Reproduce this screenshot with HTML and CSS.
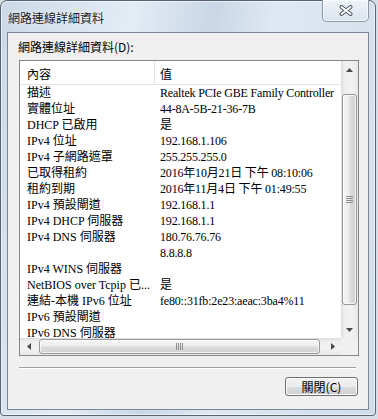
FILE: index.html
```html
<!DOCTYPE html>
<html lang="zh-Hant">
<head>
    <meta charset="UTF-8">
    <title>網路連線詳細資料</title>
    <link rel="stylesheet" href="styles.css">
</head>
<body>
    <div class="window">
        <div class="titlebar">
            <span class="title">網路連線詳細資料</span>
            <div class="close-btn">
                <svg width="14" height="11" viewBox="0 0 14 11">
                    <path d="M2.5 2 L11.5 9 M11.5 2 L2.5 9" stroke="#4f5a68" stroke-width="4" stroke-linecap="round"/>
                    <path d="M2.5 2 L11.5 9 M11.5 2 L2.5 9" stroke="#ffffff" stroke-width="2" stroke-linecap="round"/>
                </svg>
            </div>
        </div>

        <div class="client">
            <div class="caption">網路連線詳細資料(D):</div>

            <div class="listview">
                <div class="list-body">
                    <div class="list-header">
                        <div class="cell-name">內容</div>
                        <div class="cell-value">值</div>
                    </div>
                    <div class="row"><div class="cell-name">描述</div><div class="cell-value">Realtek PCIe GBE Family Controller</div></div>
                    <div class="row"><div class="cell-name">實體位址</div><div class="cell-value">44-8A-5B-21-36-7B</div></div>
                    <div class="row"><div class="cell-name">DHCP 已啟用</div><div class="cell-value">是</div></div>
                    <div class="row"><div class="cell-name">IPv4 位址</div><div class="cell-value">192.168.1.106</div></div>
                    <div class="row"><div class="cell-name">IPv4 子網路遮罩</div><div class="cell-value">255.255.255.0</div></div>
                    <div class="row"><div class="cell-name">已取得租約</div><div class="cell-value">2016年10月21日 下午 08:10:06</div></div>
                    <div class="row"><div class="cell-name">租約到期</div><div class="cell-value">2016年11月4日 下午 01:49:55</div></div>
                    <div class="row"><div class="cell-name">IPv4 預設閘道</div><div class="cell-value">192.168.1.1</div></div>
                    <div class="row"><div class="cell-name">IPv4 DHCP 伺服器</div><div class="cell-value">192.168.1.1</div></div>
                    <div class="row"><div class="cell-name">IPv4 DNS 伺服器</div><div class="cell-value">180.76.76.76</div></div>
                    <div class="row"><div class="cell-name"></div><div class="cell-value">8.8.8.8</div></div>
                    <div class="row"><div class="cell-name">IPv4 WINS 伺服器</div><div class="cell-value"></div></div>
                    <div class="row"><div class="cell-name">NetBIOS over Tcpip 已...</div><div class="cell-value">是</div></div>
                    <div class="row"><div class="cell-name">連結-本機 IPv6 位址</div><div class="cell-value">fe80::31fb:2e23:aeac:3ba4%11</div></div>
                    <div class="row"><div class="cell-name">IPv6 預設閘道</div><div class="cell-value"></div></div>
                    <div class="row"><div class="cell-name">IPv6 DNS 伺服器</div><div class="cell-value"></div></div>
                </div>

                <div class="vscroll">
                    <div class="arrow-btn">
                        <svg width="7" height="4" viewBox="0 0 7 4"><polygon points="0,4 3.5,0 7,4" fill="#4a4a4a"/></svg>
                    </div>
                    <div class="vtrack">
                        <div class="vthumb">
                            <svg width="7" height="7" viewBox="0 0 7 7">
                                <path d="M0 0.5H7M0 2.5H7M0 4.5H7M0 6.5H7" stroke="#8c8c8c" stroke-width="1"/>
                            </svg>
                        </div>
                    </div>
                    <div class="arrow-btn">
                        <svg width="7" height="4" viewBox="0 0 7 4"><polygon points="0,0 7,0 3.5,4" fill="#4a4a4a"/></svg>
                    </div>
                </div>

                <div class="hscroll">
                    <div class="arrow-btn">
                        <svg width="4" height="7" viewBox="0 0 4 7"><polygon points="4,0 4,7 0,3.5" fill="#4a4a4a"/></svg>
                    </div>
                    <div class="htrack">
                        <div class="hthumb">
                            <svg width="7" height="7" viewBox="0 0 7 7">
                                <path d="M0.5 0V7M2.5 0V7M4.5 0V7M6.5 0V7" stroke="#8c8c8c" stroke-width="1"/>
                            </svg>
                        </div>
                    </div>
                    <div class="arrow-btn">
                        <svg width="4" height="7" viewBox="0 0 4 7"><polygon points="0,0 4,3.5 0,7" fill="#4a4a4a"/></svg>
                    </div>
                </div>

                <div class="corner"></div>
            </div>

            <div class="separator"></div>

            <div class="actions">
                <button class="btn">關閉(C)</button>
            </div>
        </div>
    </div>
</body>
</html>
```

FILE: styles.css
```css
* {
    box-sizing: border-box;
}
body {
    margin: 0;
    width: 378px;
    height: 419px;
    overflow: hidden;
    background-color: #d7dde4;
    font-family: "Noto Sans CJK TC", sans-serif;
    font-size: 12px;
    color: #000;
}
.window {
    width: 376px;
    height: 416px;
    display: flex;
    flex-direction: column;
    padding: 0 6px 5px 6px;
    border: 1px solid #59636f;
    border-radius: 7px 7px 4px 4px;
    background: linear-gradient(100deg, #cbd9e8 0%, #e4ecf5 30%, #c9d7e6 48%, #dfe8f2 62%, #d0ddeb 100%);
    box-shadow: inset 0 0 0 1px rgba(255, 255, 255, 0.55);
}
.titlebar {
    height: 31px;
    flex: none;
    display: flex;
    justify-content: space-between;
    align-items: flex-start;
}
.title {
    padding: 10px 0 0 1px;
    line-height: 14px;
    color: #1b1b1b;
    text-shadow: 0 0 4px rgba(255, 255, 255, 0.9);
}
.close-btn {
    width: 47px;
    height: 22px;
    margin-top: -1px;
    display: flex;
    align-items: center;
    justify-content: center;
    border: 1px solid rgba(70, 85, 105, 0.55);
    border-top: none;
    border-radius: 0 0 5px 5px;
    background: linear-gradient(#eef3f8, #dbe4ee);
    box-shadow: inset 0 0 0 1px rgba(255, 255, 255, 0.6);
}
.client {
    flex: 1;
    display: flex;
    flex-direction: column;
    border: 1px solid #7b8795;
    background-color: #f0f0f0;
}
.caption {
    padding: 7px 0 6px 10px;
    line-height: 14px;
}
.listview {
    width: 340px;
    height: 296px;
    margin-left: 11px;
    display: grid;
    grid-template-columns: 321px 17px;
    grid-template-rows: 277px 17px;
    border: 1px solid #828790;
    background-color: #fff;
}
.list-body {
    overflow: hidden;
    font-family: "Liberation Serif", "Noto Sans CJK TC", serif;
    font-size: 12px;
}
.list-header {
    display: flex;
    height: 24px;
    border-bottom: 1px solid #e5e5e5;
}
.list-header .cell-name,
.list-header .cell-value {
    padding-top: 6px;
    line-height: 16px;
}
.list-header .cell-name {
    border-right: 1px solid #e5e5e5;
}
.row {
    display: flex;
    height: 16px;
    line-height: 16px;
}
.cell-name {
    width: 135px;
    flex: none;
    padding-left: 7px;
    white-space: nowrap;
    overflow: hidden;
}
.cell-value {
    padding-left: 5px;
    white-space: nowrap;
    letter-spacing: -0.18px;
}
.vscroll {
    display: flex;
    flex-direction: column;
    background: linear-gradient(to right, #dcdcdc, #eeeeee 20%, #f2f2f2 60%, #e8e8e8);
}
.hscroll {
    display: flex;
    background: linear-gradient(#dcdcdc, #eeeeee 20%, #f2f2f2 60%, #e8e8e8);
}
.arrow-btn {
    width: 17px;
    height: 17px;
    flex: none;
    display: flex;
    align-items: center;
    justify-content: center;
}
.vtrack {
    flex: 1;
    padding-top: 16px;
}
.vthumb {
    height: 211px;
    margin: 0 1px;
    display: flex;
    align-items: center;
    justify-content: center;
    border: 1px solid #979797;
    border-radius: 3px;
    background: linear-gradient(to right, #f6f6f6, #ececec 45%, #dcdcdc 55%, #d2d2d2);
    box-shadow: inset 0 0 0 1px rgba(255, 255, 255, 0.7);
}
.htrack {
    flex: 1;
    padding-left: 2px;
}
.hthumb {
    width: 281px;
    height: 15px;
    margin-top: 1px;
    display: flex;
    align-items: center;
    justify-content: center;
    border: 1px solid #979797;
    border-radius: 3px;
    background: linear-gradient(#f6f6f6, #ececec 45%, #dcdcdc 55%, #d2d2d2);
    box-shadow: inset 0 0 0 1px rgba(255, 255, 255, 0.7);
}
.corner {
    background-color: #f0f0f0;
}
.separator {
    width: 337px;
    height: 2px;
    margin: 11px 0 0 11px;
    border-top: 1px solid #a0a0a0;
    border-bottom: 1px solid #fff;
}
.actions {
    display: flex;
    justify-content: flex-end;
    margin-top: 8px;
    padding-right: 10px;
}
.btn {
    width: 73px;
    height: 19px;
    padding: 0;
    font-family: "Noto Sans CJK TC", sans-serif;
    font-size: 12px;
    line-height: 16px;
    color: #000;
    border: 1px solid #707070;
    border-radius: 3px;
    background: linear-gradient(#f2f2f2, #ebebeb 50%, #dddddd 51%, #cfcfcf);
    box-shadow: inset 0 0 0 1px #fcfcfc;
}
```
